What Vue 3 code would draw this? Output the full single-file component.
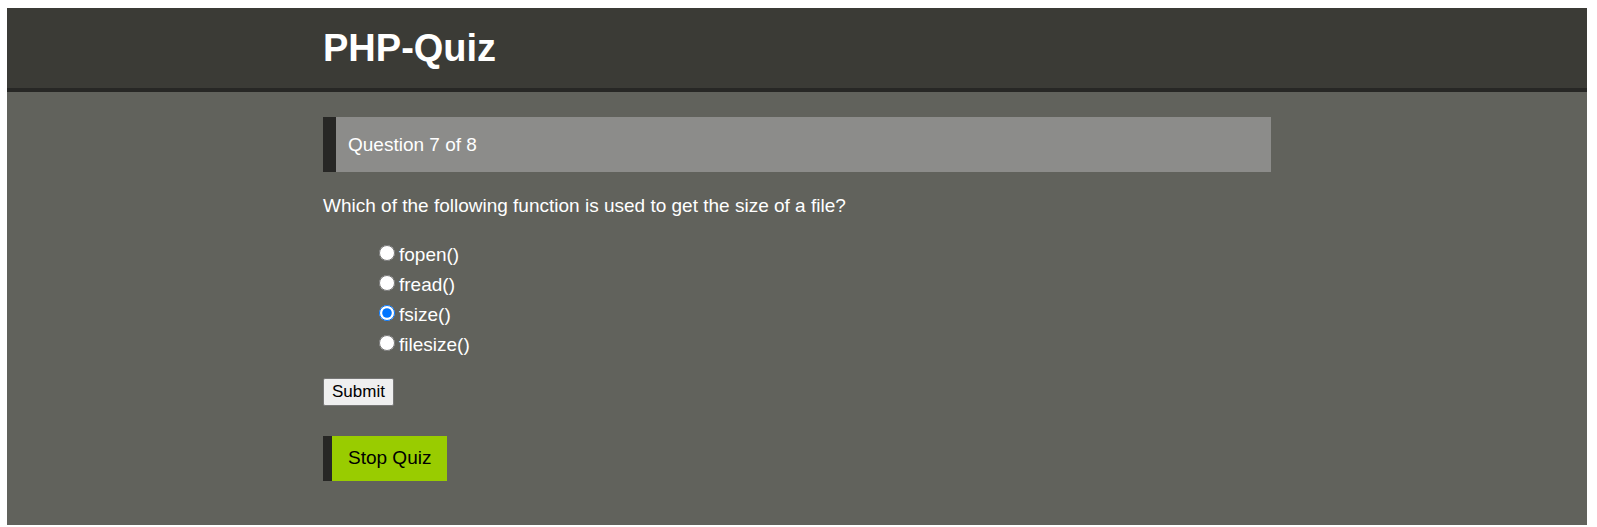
<script setup>
import { ref } from 'vue'

const title = 'PHP-Quiz'
const current = 7
const total = 8
const question = 'Which of the following function is used to get the size of a file?'
const choices = ['fopen()', 'fread()', 'fsize()', 'filesize()']
const selected = ref('fsize()')
</script>

<template>
  <div class="page">
    <header class="header">
      <div class="container">
        <h1 class="title">{{ title }}</h1>
      </div>
    </header>
    <main class="main">
      <div class="container">
        <div class="current">Question {{ current }} of {{ total }}</div>
        <form @submit.prevent>
          <p id="question" class="question">{{ question }}</p>
          <ul class="choices" role="radiogroup" aria-labelledby="question">
            <li v-for="(choice, i) in choices" :key="choice" class="choice">
              <input :id="`choice-${i}`" v-model="selected" class="radio" type="radio" name="choice" :value="choice" />
              <label :for="`choice-${i}`">{{ choice }}</label>
            </li>
          </ul>
          <button class="submit" type="submit">Submit</button>
        </form>
        <a class="stop" href="#">Stop Quiz</a>
      </div>
    </main>
  </div>
</template>

<style>
body {
  margin: 0;
  background: #fff;
}
</style>

<style scoped>
.page {
  margin: 8px 10px 2px 7px;
  font-family: "Liberation Sans", Arial, sans-serif;
  font-size: 19px;
  line-height: 30px;
  color: #fff;
  background: #61625c;
}

.container {
  width: 60%;
  margin: 0 auto;
}

.header {
  padding: 16px 0;
  background: #3b3b36;
  border-bottom: 4px solid #272725;
}

.title {
  margin: 0;
  font-size: 38px;
  line-height: 48px;
}

.main {
  padding: 25px 0 44px;
}

.current {
  padding: 12px;
  line-height: 31px;
  background: #8c8c8a;
  border-left: 13px solid #272725;
}

.question {
  margin: 19px 0;
}

.choices {
  margin: 0 0 18px;
  padding: 0 0 0 56px;
  list-style: none;
}

.choice {
  display: flex;
  gap: 4px;
}

.radio {
  width: 16px;
  height: 16px;
  margin: 5px 0 0;
}

.submit {
  display: block;
  padding: 2px 8px;
  font-family: inherit;
  font-size: 17px;
  line-height: 22px;
  color: #000;
  background: #efefef;
  border: 1px solid #767676;
  border-radius: 2px;
}

.stop {
  display: inline-block;
  margin-top: 30px;
  padding: 7px 16px 8px;
  color: #000;
  text-decoration: none;
  background: #99cc00;
  border-left: 9px solid #272725;
}
</style>
